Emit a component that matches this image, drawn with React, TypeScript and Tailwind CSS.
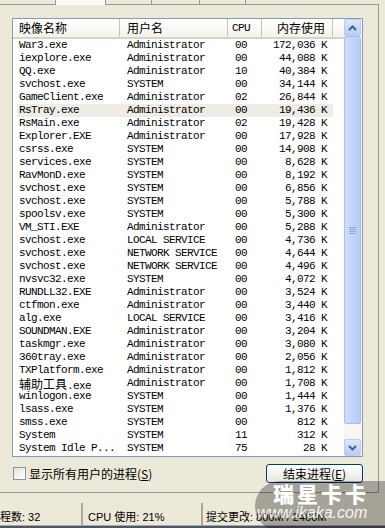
import React from "react";

interface Proc {
  name: string;
  user: string;
  cpu: string;
  mem: string;
}

const procs: Proc[] = [
  { name: "War3.exe", user: "Administrator", cpu: "00", mem: "172,036 K" },
  { name: "iexplore.exe", user: "Administrator", cpu: "00", mem: "44,088 K" },
  { name: "QQ.exe", user: "Administrator", cpu: "10", mem: "40,384 K" },
  { name: "svchost.exe", user: "SYSTEM", cpu: "00", mem: "34,144 K" },
  { name: "GameClient.exe", user: "Administrator", cpu: "02", mem: "26,844 K" },
  { name: "RsTray.exe", user: "Administrator", cpu: "00", mem: "19,436 K" },
  { name: "RsMain.exe", user: "Administrator", cpu: "02", mem: "19,428 K" },
  { name: "Explorer.EXE", user: "Administrator", cpu: "00", mem: "17,928 K" },
  { name: "csrss.exe", user: "SYSTEM", cpu: "00", mem: "14,908 K" },
  { name: "services.exe", user: "SYSTEM", cpu: "00", mem: "8,628 K" },
  { name: "RavMonD.exe", user: "SYSTEM", cpu: "00", mem: "8,192 K" },
  { name: "svchost.exe", user: "SYSTEM", cpu: "00", mem: "6,856 K" },
  { name: "svchost.exe", user: "SYSTEM", cpu: "00", mem: "5,788 K" },
  { name: "spoolsv.exe", user: "SYSTEM", cpu: "00", mem: "5,300 K" },
  { name: "VM_STI.EXE", user: "Administrator", cpu: "00", mem: "5,288 K" },
  { name: "svchost.exe", user: "LOCAL SERVICE", cpu: "00", mem: "4,736 K" },
  { name: "svchost.exe", user: "NETWORK SERVICE", cpu: "00", mem: "4,644 K" },
  { name: "svchost.exe", user: "NETWORK SERVICE", cpu: "00", mem: "4,496 K" },
  { name: "nvsvc32.exe", user: "SYSTEM", cpu: "00", mem: "4,072 K" },
  { name: "RUNDLL32.EXE", user: "Administrator", cpu: "00", mem: "3,524 K" },
  { name: "ctfmon.exe", user: "Administrator", cpu: "00", mem: "3,440 K" },
  { name: "alg.exe", user: "LOCAL SERVICE", cpu: "00", mem: "3,416 K" },
  { name: "SOUNDMAN.EXE", user: "Administrator", cpu: "00", mem: "3,204 K" },
  { name: "taskmgr.exe", user: "Administrator", cpu: "00", mem: "3,080 K" },
  { name: "360tray.exe", user: "Administrator", cpu: "00", mem: "2,056 K" },
  { name: "TXPlatform.exe", user: "Administrator", cpu: "00", mem: "1,812 K" },
  { name: "辅助工具.exe", user: "Administrator", cpu: "00", mem: "1,708 K" },
  { name: "winlogon.exe", user: "SYSTEM", cpu: "00", mem: "1,444 K" },
  { name: "lsass.exe", user: "SYSTEM", cpu: "00", mem: "1,376 K" },
  { name: "smss.exe", user: "SYSTEM", cpu: "00", mem: "812 K" },
  { name: "System", user: "SYSTEM", cpu: "11", mem: "312 K" },
  { name: "System Idle P...", user: "SYSTEM", cpu: "75", mem: "28 K" },
];

const SELECTED = 5;

const ProcName = ({ name }: { name: string }) => {
  if (name.startsWith("辅助工具")) {
    return (
      <div className="h-[13px] flex items-baseline">
        <span className="text-[12px] leading-[13px] tracking-normal font-['Noto_Sans_CJK_SC',sans-serif]">辅助工具</span>
        <span className="leading-[13px]">{name.slice(4)}</span>
      </div>
    );
  }
  return <>{name}</>;
};

const Chevron = ({ up }: { up: boolean }) => (
  <svg width="9" height="6" viewBox="0 0 9 6">
    <polyline
      points={up ? "1,5 4.5,1.5 8,5" : "1,1 4.5,4.5 8,1"}
      fill="none"
      stroke="#4d6185"
      strokeWidth="2"
    />
  </svg>
);

const ScrollButton = ({ up }: { up: boolean }) => (
  <div className="h-[17px] flex items-center justify-center rounded-[2px] border border-[#b8ccf6] bg-gradient-to-b from-[#dbe6fd] to-[#b9ccf7]">
    <Chevron up={up} />
  </div>
);

const App: React.FC = () => {
  return (
    <div className="relative w-[385px] h-[528px] overflow-hidden bg-[#ece9d8] flex flex-col font-['Liberation_Sans','Noto_Sans_CJK_SC',sans-serif] text-black">
      {/* tab strip, cut off at the top */}
      <div className="flex h-[5px] w-[379px] shrink-0">
        <div className="w-[56px] border-r border-b border-[#919b9c]" />
        <div className="w-[50px] border-r border-[#919b9c] bg-[#fafaf6]" />
        <div className="w-[46px] border-r border-b border-[#919b9c]" />
        <div className="w-[48px] border-r border-b border-[#919b9c]" />
        <div className="w-[46px] border-r border-b border-[#919b9c]" />
        <div className="flex-1 border-b border-[#919b9c]" />
      </div>

      {/* tab page */}
      <div className="w-[379px] h-[488px] shrink-0 border-r border-b border-[#919b9c] pl-[12px] pt-[13px] flex flex-col">
        <div className="w-[351px] h-[439px] border border-[#7f9db9] bg-white flex">
          <div className="flex-1 flex flex-col">
            {/* column headers */}
            <div className="h-[20px] flex items-stretch bg-gradient-to-b from-white to-[#f3f2ec] border-b-2 border-[#d8d4c4] text-[12px] font-['Noto_Sans_CJK_SC',sans-serif]">
              <div className="w-[107px] pl-[6px] flex items-center border-r border-[#c7c5b2]">映像名称</div>
              <div className="w-[108px] pl-[7px] flex items-center border-r border-[#c7c5b2]">用户名</div>
              <div className="w-[34px] pl-[4px] flex items-center border-r border-[#c7c5b2] font-['Liberation_Mono',monospace] text-[11px] tracking-[-0.6px]">
                CPU
              </div>
              <div className="w-[71px] pr-[7px] flex items-center justify-end border-r border-[#c7c5b2]">内存使用</div>
              <div className="flex-1" />
            </div>

            {/* process rows */}
            <div className="flex flex-col font-['Liberation_Mono','Noto_Sans_CJK_SC',monospace] text-[11px] tracking-[-0.6px] leading-[13px]">
              {procs.map((p, idx) => (
                <div key={idx} className="h-[13px] flex pl-[4px]">
                  <div className={`w-[316px] flex whitespace-nowrap ${idx === SELECTED ? "bg-[#eeece4]" : ""}`}>
                    <div className="w-[103px] pl-[2px]">
                      <ProcName name={p.name} />
                    </div>
                    <div className="w-[108px] pl-[7px]">{p.user}</div>
                    <div className="w-[34px] pl-[7px]">{p.cpu}</div>
                    <div className="w-[71px] pr-[6px] text-right">{p.mem}</div>
                  </div>
                </div>
              ))}
            </div>
          </div>

          {/* vertical scrollbar */}
          <div className="w-[18px] flex flex-col bg-[#f7f6f1] pr-[1px]">
            <ScrollButton up />
            <div className="flex-1 flex flex-col pb-[15px]">
              <div className="flex-1 rounded-[2px] border border-[#a9bdee] bg-gradient-to-r from-[#d0ddfc] to-[#b8ccf9] flex items-center justify-center">
                <div className="flex flex-col gap-[1px]">
                  <div className="w-[7px] h-[1px] bg-[#8fa6dc]" />
                  <div className="w-[7px] h-[1px] bg-[#8fa6dc]" />
                  <div className="w-[7px] h-[1px] bg-[#8fa6dc]" />
                  <div className="w-[7px] h-[1px] bg-[#8fa6dc]" />
                </div>
              </div>
            </div>
            <ScrollButton up={false} />
          </div>
        </div>

        {/* checkbox + end process button */}
        <div className="w-[351px] mt-[7px] flex items-center justify-between text-[12px] font-['Noto_Sans_CJK_SC',sans-serif]">
          <label className="flex items-center gap-[3px] pl-[1px]">
            <span className="w-[13px] h-[13px] border border-[#8a97a8] bg-gradient-to-br from-[#e2e2dc] to-white" />
            <span>
              显示所有用户的进程(<span className="underline">S</span>)
            </span>
          </label>
          <button className="w-[97px] h-[19px] rounded-[3px] border border-[#003c74] bg-gradient-to-b from-white to-[#e6e5dd] text-[12px] leading-none">
            结束进程(<span className="underline">E</span>)
          </button>
        </div>
      </div>

      {/* status bar */}
      <div className="flex-1 flex flex-col justify-end">
        <div className="h-[22px] flex items-stretch text-[11px] leading-[14px] whitespace-nowrap">
          <div className="w-[83px] flex items-end pb-[1px] overflow-hidden border-r-2 border-[#aca899]">
            <span className="-ml-[11px]">进程数: 32</span>
          </div>
          <div className="w-[120px] flex items-end pb-[1px] pl-[5px] border-r-2 border-[#aca899]">CPU 使用: 21%</div>
          <div className="flex-1 flex items-end pb-[1px] pl-[3px]">提交更改: 806M / 2460M</div>
        </div>
        <div className="h-[1px] bg-[#aca899]" />
        <div className="h-[2px] bg-[#4a5670]" />
      </div>

      {/* site watermark over the bottom-right corner */}
      <div className="absolute left-[255px] top-[481px] w-[140px] h-[50px] rounded-l-[25px] bg-black/30 pointer-events-none">
        <div className="pl-[18px] pt-[2px] text-[21px] leading-[21px] font-black tracking-[3px] text-white font-['Noto_Sans_CJK_SC',sans-serif]">
          瑞星卡卡
        </div>
        <div className="pl-[2px] text-[16px] leading-[18px] italic text-white/90 font-['Liberation_Sans',sans-serif]">
          www.ikaka.com
        </div>
      </div>
    </div>
  );
};

export default App;
